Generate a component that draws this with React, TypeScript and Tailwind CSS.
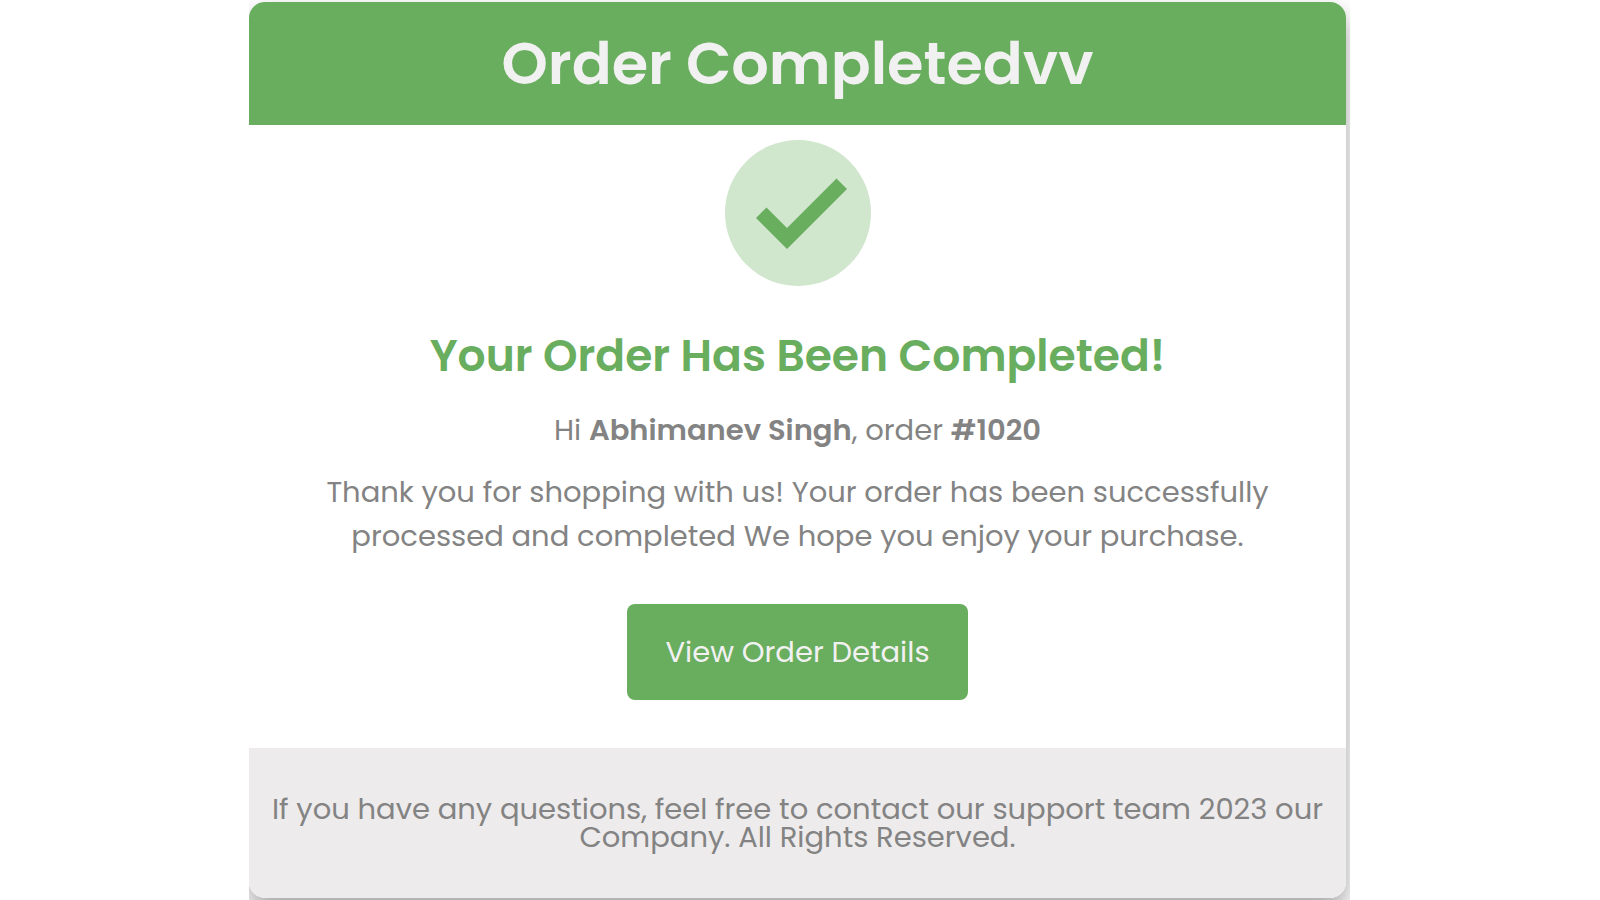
export default function App() {
  return (
    <div className="min-h-screen bg-white pr-px font-['Poppins','Inter',sans-serif] text-[29px] text-[#838383]">
      <main className="mx-auto max-w-[1101px] overflow-hidden pt-[2px] pr-1 pb-[2px]">
        <article className="overflow-hidden rounded-2xl bg-white text-center shadow-[0_12px_24px_rgba(0,0,0,0.36)]">
          <header className="bg-[#69ad5e] px-4 pt-[26px] pb-[25px]">
            <h1 className="text-[59px] leading-[72px] font-semibold text-[#f2f1f2]">Order Completedvv</h1>
          </header>

          <section className="flex flex-col items-center px-4 pt-[15px] pb-12">
            <svg viewBox="0 0 146 146" className="size-[146px]" role="img" aria-label="Completed">
              <circle cx="73" cy="73" r="73" fill="#d0e6cd" />
              <path d="M31 78 L41.5 67.5 L62 88 L111.5 38.5 L122 49 L62 109 Z" fill="#69ad5e" />
            </svg>
            <h2 className="mt-10 text-[44px] leading-[60px] font-semibold text-[#69ad5e]">
              Your Order Has Been Completed!
            </h2>
            <p className="mt-[22px] leading-[44px]">
              Hi <strong className="font-semibold">Abhimanev Singh</strong>, order{" "}
              <strong className="font-semibold">#1020</strong>
            </p>
            <p className="mt-[18px] leading-[44px]">
              Thank you for shopping with us! Your order has been successfully
              <br />
              processed and completed We hope you enjoy your purchase.
            </p>
            <a href="#order" className="mt-[46px] rounded-lg bg-[#69ad5e] px-[38px] py-[26px] leading-[44px] text-[#f2f1f2]">
              View Order Details
            </a>
          </section>

          <footer className="bg-[#edebec] px-4 pt-[47px] pb-[47px]">
            <p className="leading-7">
              If you have any questions, feel free to contact our support team 2023 our
              <br />
              Company. All Rights Reserved.
            </p>
          </footer>
        </article>
      </main>
    </div>
  );
}
